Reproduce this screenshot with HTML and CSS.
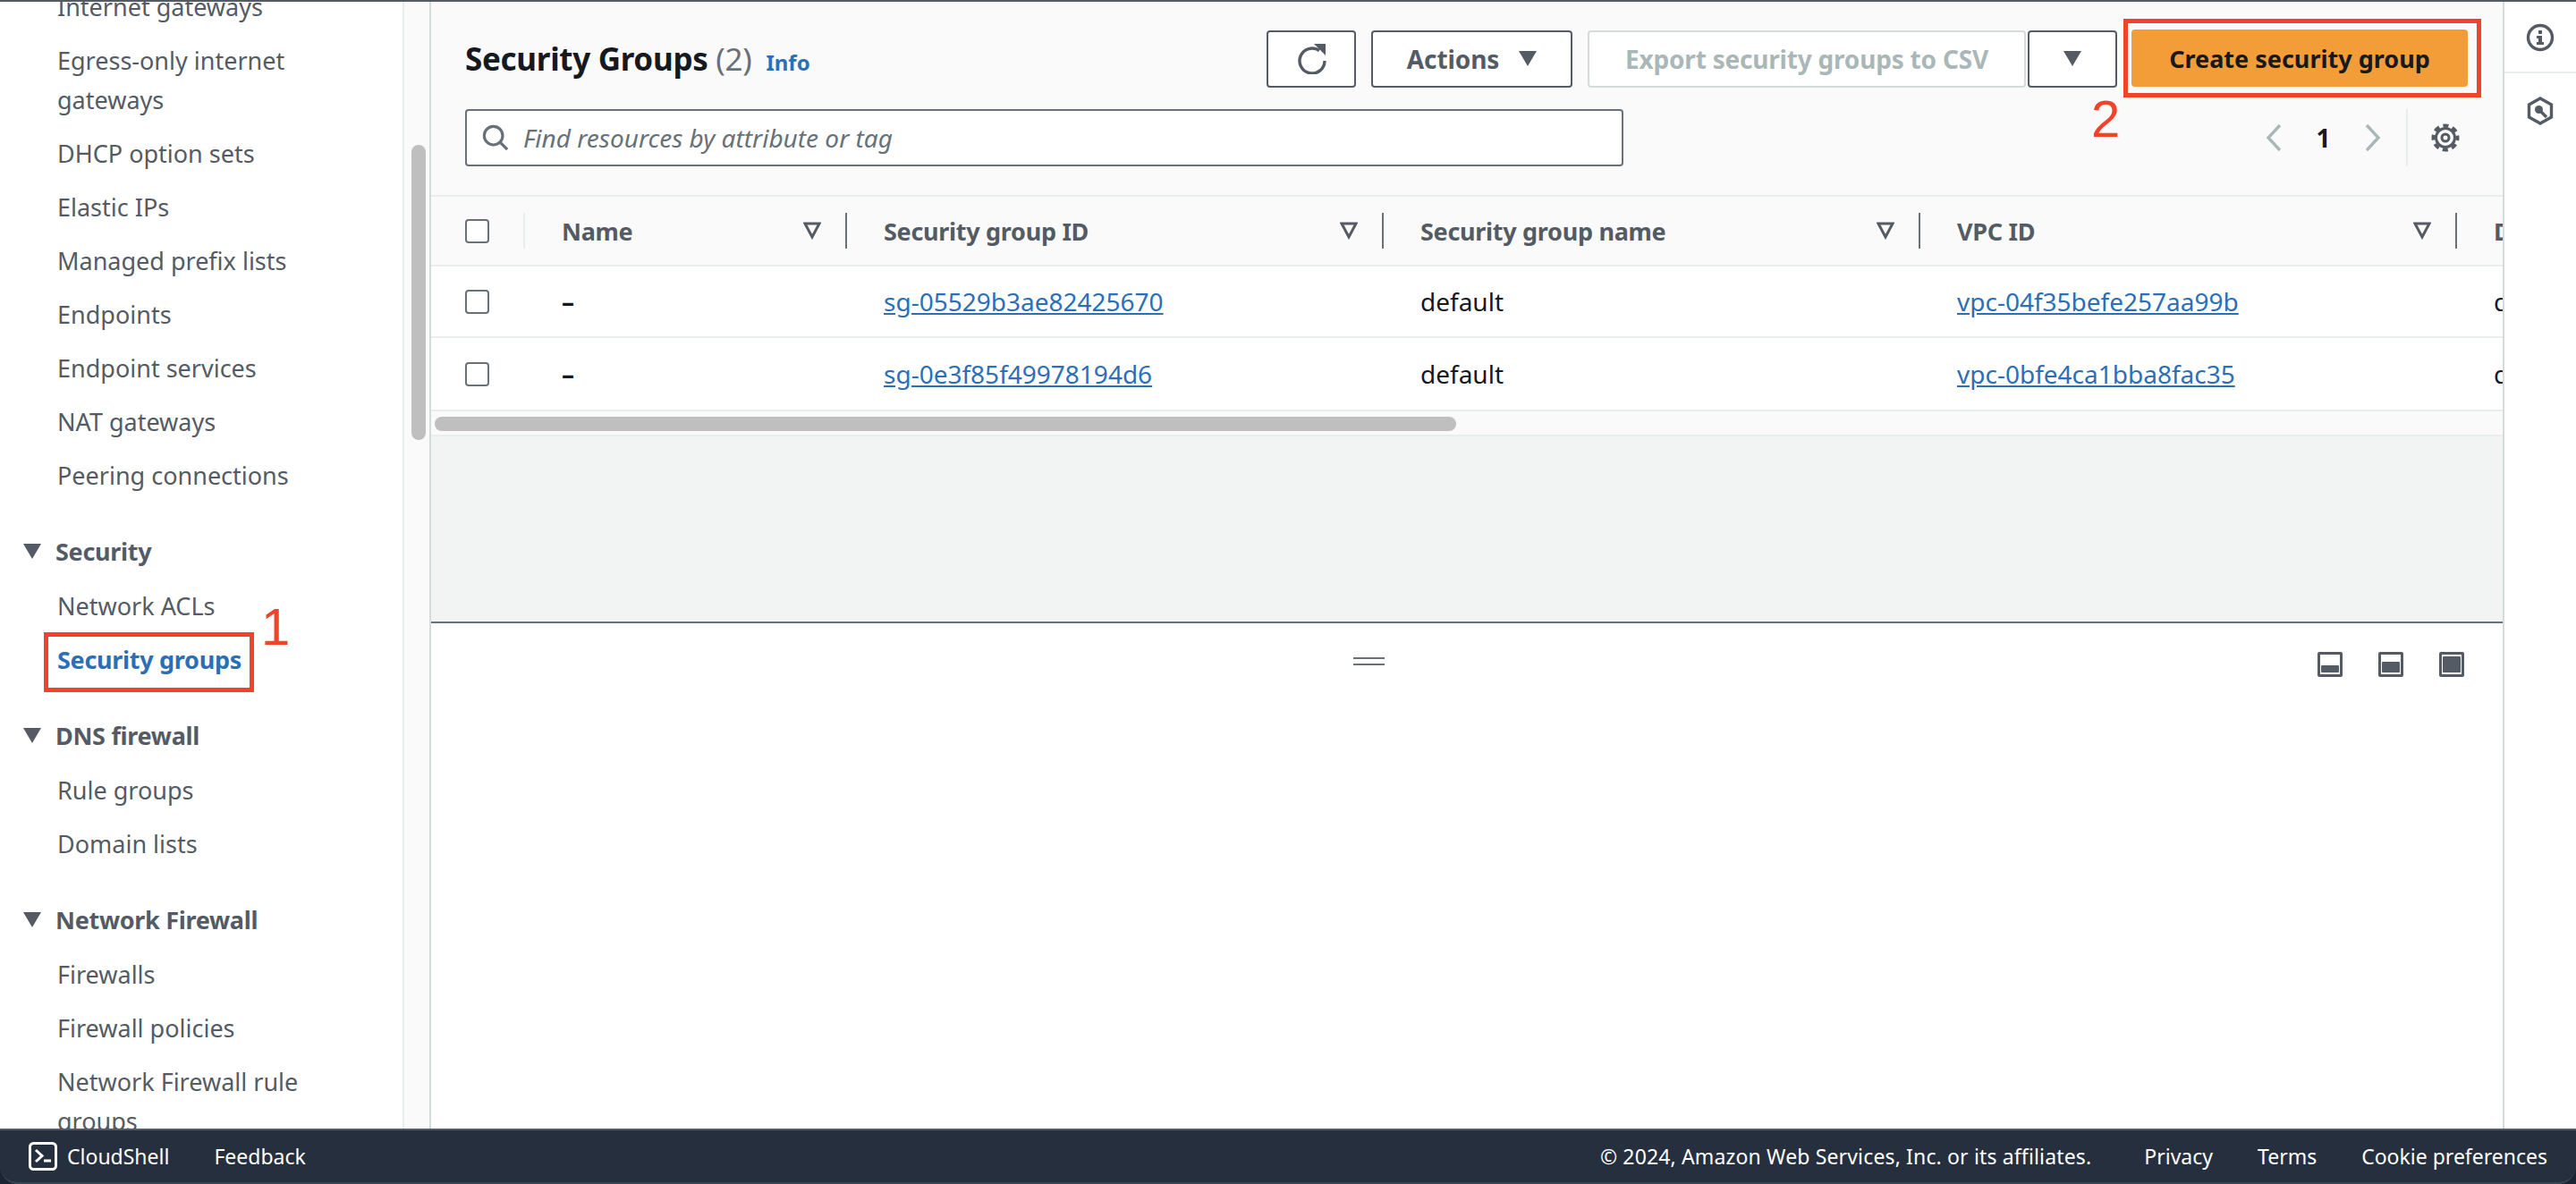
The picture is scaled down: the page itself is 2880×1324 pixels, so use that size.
FILE: index.html
```html
<!DOCTYPE html>
<html lang="en">
<head>
  <meta charset="UTF-8" />
  <title>Security Groups | VPC Console</title>
  <link rel="stylesheet" href="styles.css">
</head>
<body>
  <div class="app">
    <div class="workspace">
      <nav class="sidenav">
        <ul class="nav-list nav-list-first">
          <li>Internet gateways</li>
          <li>Egress-only internet gateways</li>
          <li>DHCP option sets</li>
          <li>Elastic IPs</li>
          <li>Managed prefix lists</li>
          <li>Endpoints</li>
          <li>Endpoint services</li>
          <li>NAT gateways</li>
          <li>Peering connections</li>
        </ul>
        <h3 class="nav-heading"><svg class="caret" viewBox="0 0 20 18"><path d="M0 0h20L10 17z"/></svg>Security</h3>
        <ul class="nav-list">
          <li>Network ACLs</li>
          <li class="active">Security groups<span class="callout callout-nav"></span><span class="callout-num callout-num-1">1</span></li>
        </ul>
        <h3 class="nav-heading"><svg class="caret" viewBox="0 0 20 18"><path d="M0 0h20L10 17z"/></svg>DNS firewall</h3>
        <ul class="nav-list">
          <li>Rule groups</li>
          <li>Domain lists</li>
        </ul>
        <h3 class="nav-heading"><svg class="caret" viewBox="0 0 20 18"><path d="M0 0h20L10 17z"/></svg>Network Firewall</h3>
        <ul class="nav-list">
          <li>Firewalls</li>
          <li>Firewall policies</li>
          <li>Network Firewall rule groups</li>
        </ul>
      </nav>
      <div class="nav-scroll"><div class="nav-thumb"></div></div>

      <main class="main">
        <section class="top-pane">
          <div class="toolbar">
            <div class="toolbar-row">
              <h1 class="title">Security Groups <span class="count">(2)</span></h1>
              <a class="info-link">Info</a>
              <div class="actions">
                <button class="btn btn-refresh" type="button">
                  <svg class="icon-refresh" viewBox="0 0 34 34"><path d="M25 7.500A14 14 0 1 0 31 19" fill="none" stroke="#545b64" stroke-width="3.400"/><path d="M19 0h13v13z" fill="#545b64"/></svg>
                </button>
                <button class="btn btn-actions" type="button">Actions<svg class="caret" viewBox="0 0 20 18"><path d="M0 0h20L10 17z"/></svg></button>
                <button class="btn btn-export" type="button">Export security groups to CSV</button>
                <button class="btn btn-more" type="button"><svg class="caret" viewBox="0 0 20 18"><path d="M0 0h20L10 17z"/></svg></button>
                <div class="create-wrap">
                  <button class="btn btn-primary" type="button">Create security group</button>
                  <span class="callout-num callout-num-2">2</span>
                </div>
              </div>
            </div>
            <div class="toolbar-row toolbar-row-search">
              <div class="search">
                <svg class="icon-search" viewBox="0 0 32 32"><circle cx="13.500" cy="13.500" r="11" fill="none" stroke="#687078" stroke-width="3.400"/><path d="M21.500 21.500 30 30" stroke="#687078" stroke-width="3.400"/></svg>
                <span class="placeholder">Find resources by attribute or tag</span>
              </div>
              <div class="pager">
                <svg class="chevron" viewBox="0 0 20 32"><path d="M17 2 4 16l13 14" fill="none" stroke="#aab7b8" stroke-width="3.400"/></svg>
                <span class="page-num">1</span>
                <svg class="chevron" viewBox="0 0 20 32"><path d="M3 2l13 14L3 30" fill="none" stroke="#aab7b8" stroke-width="3.400"/></svg>
                <div class="pager-settings">
                  <svg class="icon-gear" viewBox="0 0 32 32">
                    <circle cx="16" cy="16" r="10.500" fill="none" stroke="#545b64" stroke-width="3"/>
                    <circle cx="16" cy="16" r="13.500" fill="none" stroke="#545b64" stroke-width="4" stroke-dasharray="6.100 4.500" stroke-dashoffset="3"/>
                    <circle cx="16" cy="16" r="4" fill="none" stroke="#545b64" stroke-width="3"/>
                  </svg>
                </div>
              </div>
            </div>
          </div>

          <div class="table">
            <div class="row row-head">
              <div class="cell cell-check"><span class="check"></span></div>
              <div class="cell cell-name"><div class="th">Name<svg class="sort" viewBox="0 0 20 20"><path d="M2 2h16L10 17z" fill="none" stroke="#545b64" stroke-width="3"/></svg></div></div>
              <div class="cell cell-wide"><div class="th">Security group ID<svg class="sort" viewBox="0 0 20 20"><path d="M2 2h16L10 17z" fill="none" stroke="#545b64" stroke-width="3"/></svg></div></div>
              <div class="cell cell-wide"><div class="th">Security group name<svg class="sort" viewBox="0 0 20 20"><path d="M2 2h16L10 17z" fill="none" stroke="#545b64" stroke-width="3"/></svg></div></div>
              <div class="cell cell-wide"><div class="th">VPC ID<svg class="sort" viewBox="0 0 20 20"><path d="M2 2h16L10 17z" fill="none" stroke="#545b64" stroke-width="3"/></svg></div></div>
              <div class="cell cell-wide"><div class="th">Description</div></div>
            </div>
            <div class="row">
              <div class="cell cell-check"><span class="check"></span></div>
              <div class="cell cell-name"><span class="td td-empty">–</span></div>
              <div class="cell cell-wide"><a class="td link">sg-05529b3ae82425670</a></div>
              <div class="cell cell-wide"><span class="td">default</span></div>
              <div class="cell cell-wide"><a class="td link">vpc-04f35befe257aa99b</a></div>
              <div class="cell cell-wide"><span class="td">default VPC security group</span></div>
            </div>
            <div class="row">
              <div class="cell cell-check"><span class="check"></span></div>
              <div class="cell cell-name"><span class="td td-empty">–</span></div>
              <div class="cell cell-wide"><a class="td link">sg-0e3f85f49978194d6</a></div>
              <div class="cell cell-wide"><span class="td">default</span></div>
              <div class="cell cell-wide"><a class="td link">vpc-0bfe4ca1bba8fac35</a></div>
              <div class="cell cell-wide"><span class="td">default VPC security group</span></div>
            </div>
            <div class="table-scroll"><div class="table-thumb"></div></div>
          </div>
        </section>

        <section class="bottom-pane">
          <div class="handle"></div>
          <div class="pane-icons">
            <span class="pane-icon"><span class="pane-fill pane-fill-s"></span></span>
            <span class="pane-icon"><span class="pane-fill pane-fill-m"></span></span>
            <span class="pane-icon"><span class="pane-fill pane-fill-l"></span></span>
          </div>
        </section>
      </main>

      <aside class="rail">
        <div class="rail-item rail-item-info">
          <svg class="rail-icon" viewBox="0 0 32 32">
            <circle cx="16" cy="16" r="13.500" fill="none" stroke="#545b64" stroke-width="3.400"/>
            <path d="M14 8h4v4h-4zM12 14h6v7h2v3h-8v-3h2v-4h-2z" fill="#545b64"/>
          </svg>
        </div>
        <div class="rail-item">
          <svg class="rail-icon" viewBox="0 0 32 32">
            <path d="M16 2 28.500 9v14L16 30 3.500 23V9z" fill="none" stroke="#545b64" stroke-width="3.400"/>
            <circle cx="14.500" cy="14.500" r="4.500" fill="#545b64"/>
            <path d="M16 16l7 7" stroke="#545b64" stroke-width="3.400"/>
          </svg>
        </div>
      </aside>
    </div>

    <footer class="footer">
      <div class="footer-left">
        <a class="footer-shell">
          <svg class="icon-shell" viewBox="0 0 32 32">
            <rect x="1.500" y="1.500" width="29" height="29" rx="4" fill="none" stroke="#fff" stroke-width="3"/>
            <path d="M8 9l7 6.500L8 22" fill="none" stroke="#fff" stroke-width="3"/>
            <path d="M17 21h8" stroke="#fff" stroke-width="3"/>
          </svg>CloudShell</a>
        <a>Feedback</a>
      </div>
      <div class="footer-right">
        <span class="footer-copy">© 2024, Amazon Web Services, Inc. or its affiliates.</span>
        <a>Privacy</a>
        <a>Terms</a>
        <a>Cookie preferences</a>
      </div>
    </footer>
  </div>
</body>
</html>
```

FILE: styles.css
```css
* {
  box-sizing: border-box;
}

html, body {
  margin: 0;
  height: 100%;
}

body {
  background: #1a2433;
  font-family: "Noto Sans", "Open Sans", sans-serif;
  font-size: 28px;
  color: #16191f;
  overflow: hidden;
}

.app {
  display: flex;
  flex-direction: column;
  height: 1324px;
  border-top: 2px solid #545b64;
}

.workspace {
  display: flex;
  flex: 1;
  min-height: 0;
  background: #fff;
}

/* left nav */
.sidenav {
  width: 450px;
  flex: none;
  overflow: hidden;
  color: #545b64;
  background: #fff;
}

.nav-list {
  list-style: none;
  margin: 0;
  padding: 0 60px 0 64px;
  display: flex;
  flex-direction: column;
  gap: 16px;
  font-size: 27px;
  line-height: 44px;
}

.nav-list-first {
  margin-top: -16px;
}

.nav-list li {
  position: relative;
}

.nav-list .active {
  color: #2b6fb7;
  font-weight: 700;
  letter-spacing: -0.3px;
}

.nav-heading {
  display: flex;
  align-items: center;
  margin: 41px 0 17px;
  padding-left: 26px;
  font-size: 27px;
  line-height: 44px;
  font-weight: 700;
  letter-spacing: -0.3px;
}

.caret {
  width: 20px;
  height: 18px;
  flex: none;
  fill: #545b64;
}

.nav-heading .caret {
  margin-right: 16px;
}

.callout {
  position: absolute;
  border: 5px solid #f0432a;
}

.callout-nav {
  left: -15px;
  top: -9px;
  width: 235px;
  height: 67px;
}

.callout-num {
  position: absolute;
  font-family: "Liberation Sans", Arial, sans-serif;
  font-weight: 400;
  letter-spacing: 0;
  color: #f0432a;
  line-height: 1;
}

.callout-num-1 {
  left: 228px;
  top: -44px;
  font-size: 58px;
}

.callout-num-2 {
  left: -41px;
  top: 78px;
  font-size: 58px;
}

.nav-scroll {
  width: 30px;
  flex: none;
  padding: 160px 6px 0 8px;
  background: #fafafa;
  border-left: 2px solid #eaeded;
}

.nav-thumb {
  width: 16px;
  height: 330px;
  border-radius: 8px;
  background: #bfbfbf;
}

/* main column */
.main {
  flex: 1;
  min-width: 0;
  display: flex;
  flex-direction: column;
  border-left: 2px solid #d5dbdb;
}

.top-pane {
  height: 695px;
  flex: none;
  background: #f2f3f3;
  border-bottom: 2px solid #687078;
  overflow: hidden;
}

.toolbar {
  height: 218px;
  padding: 32px 0 0 38px;
  background: #fafafa;
  border-bottom: 2px solid #eaeded;
}

.toolbar-row {
  display: flex;
  align-items: center;
}

.toolbar-row-search {
  margin-top: 24px;
}

.title {
  margin: 0;
  font-size: 35px;
  line-height: 64px;
  font-weight: 700;
  letter-spacing: -0.3px;
}

.count {
  font-weight: 400;
  color: #687078;
}

.info-link {
  margin-left: 16px;
  margin-top: 6px;
  font-size: 24px;
  font-weight: 700;
  color: #2b6fb7;
}

.actions {
  margin-left: auto;
  margin-right: 39px;
  display: flex;
  gap: 17px;
}

.btn {
  height: 64px;
  border: 2px solid #545b64;
  border-radius: 4px;
  background: #fff;
  font-family: inherit;
  font-size: 28px;
  font-weight: 700;
  letter-spacing: -0.1px;
  color: #545b64;
  display: flex;
  align-items: center;
  justify-content: center;
  padding: 0;
}

.btn-refresh {
  width: 100px;
}

.icon-refresh {
  width: 34px;
  height: 34px;
  margin-left: 2px;
}

.btn-actions {
  width: 225px;
  gap: 22px;
}

.btn-export {
  width: 490px;
  margin-right: -15px;
  border-color: #d5dbdb;
  color: #aab7b8;
  letter-spacing: -0.2px;
}

.btn-more {
  width: 100px;
}

.create-wrap {
  position: relative;
  width: 400px;
  height: 88px;
  margin: -13px -15px -13px -10px;
  padding-left: 4px;
  border: 5px solid #f0432a;
  display: flex;
  align-items: center;
}

.btn-primary {
  width: 376px;
  border: 0;
  background: #f29d38;
  color: #16191f;
  font-size: 27px;
  letter-spacing: 0;
}

.search {
  width: 1295px;
  height: 64px;
  display: flex;
  align-items: center;
  gap: 16px;
  padding-left: 17px;
  background: #fff;
  border: 2px solid #687078;
  border-radius: 4px;
}

.icon-search {
  width: 30px;
  height: 30px;
  flex: none;
}

.placeholder {
  font-style: italic;
  color: #687078;
}

.pager {
  margin-left: auto;
  margin-right: 48px;
  display: flex;
  align-items: center;
  height: 64px;
}

.chevron {
  width: 20px;
  height: 32px;
}

.page-num {
  width: 91px;
  text-align: center;
  font-weight: 700;
}

.pager-settings {
  margin-left: 27px;
  padding-left: 26px;
  height: 64px;
  display: flex;
  align-items: center;
  border-left: 2px solid #eaeded;
}

.icon-gear {
  width: 32px;
  height: 32px;
}

/* table */
.table {
  overflow: hidden;
}

.row {
  display: flex;
  width: 3200px;
  height: 80px;
  background: #fff;
  border-bottom: 2px solid #eaeded;
}

.row + .row + .row {
  height: 82px;
}

.row-head {
  height: 78px;
  background: #fafafa;
  color: #545b64;
  font-size: 27px;
  font-weight: 700;
  letter-spacing: -0.3px;
}

.cell {
  display: flex;
  align-items: center;
  flex: none;
}

.cell-check {
  width: 105px;
  padding-left: 38px;
  position: relative;
}

.row-head .cell-check::after {
  content: "";
  position: absolute;
  right: 0;
  top: 18px;
  height: 40px;
  border-right: 2px solid #eaeded;
}

.cell-name {
  width: 360px;
}

.cell-wide {
  width: 600px;
}

.check {
  width: 27px;
  height: 27px;
  border: 2px solid #687078;
  border-radius: 4px;
  background: #fff;
}

.th {
  display: flex;
  align-items: center;
  justify-content: space-between;
  width: 100%;
  height: 40px;
  padding: 0 27px 0 41px;
  border-right: 2px solid #687078;
}

.sort {
  width: 20px;
  height: 20px;
}

.td {
  margin-left: 41px;
  white-space: nowrap;
}

.td-empty {
  font-weight: 700;
}

.link {
  color: #2b6fb7;
  text-decoration: underline;
}

.table-scroll {
  height: 28px;
  padding: 6px 0 0 4px;
  background: #fafafa;
  border-bottom: 2px solid #eaeded;
}

.table-thumb {
  width: 1142px;
  height: 16px;
  border-radius: 8px;
  background: #bfbfbf;
}

.bottom-pane {
  flex: 1;
  position: relative;
  background: #fff;
  display: flex;
  justify-content: flex-end;
}

.handle {
  position: absolute;
  left: 1031px;
  top: 38px;
  width: 35px;
  height: 9px;
  border-top: 2px solid #687078;
  border-bottom: 2px solid #687078;
}

.pane-icons {
  display: flex;
  gap: 40px;
  margin: 32px 43px 0 0;
}

.pane-icon {
  display: flex;
  align-items: flex-end;
  width: 28px;
  height: 28px;
  padding: 2px 1px;
  border: 3px solid #545b64;
  border-radius: 2px;
}

.pane-fill {
  width: 100%;
  background: #545b64;
  border-radius: 1px;
}

.pane-fill-s {
  height: 8px;
}

.pane-fill-m {
  height: 12px;
}

.pane-fill-l {
  height: 18px;
}

/* right rail */
.rail {
  width: 82px;
  flex: none;
  background: #fff;
  border-left: 2px solid #d5dbdb;
}

.rail-item {
  display: flex;
  justify-content: center;
  padding-top: 26px;
}

.rail-item-info {
  height: 80px;
  padding-top: 24px;
  border-bottom: 2px solid #eaeded;
}

.rail-icon {
  width: 32px;
  height: 32px;
}

/* bottom bar */
.footer {
  height: 62px;
  flex: none;
  display: flex;
  align-items: center;
  justify-content: space-between;
  padding: 0 32px;
  background: #262f3e;
  border-top: 2px solid #545b64;
  border-bottom: 2px solid #3a4554;
  border-radius: 0 0 20px 20px;
  color: #fff;
  font-size: 23px;
}

.footer-left,
.footer-right {
  display: flex;
  align-items: center;
}

.footer-left {
  gap: 50px;
}

.footer-right {
  gap: 50px;
}

.footer-copy {
  margin-right: 9px;
  letter-spacing: 0.15px;
}

.footer-shell {
  display: flex;
  align-items: center;
  gap: 11px;
}

.icon-shell {
  width: 32px;
  height: 32px;
}
```
